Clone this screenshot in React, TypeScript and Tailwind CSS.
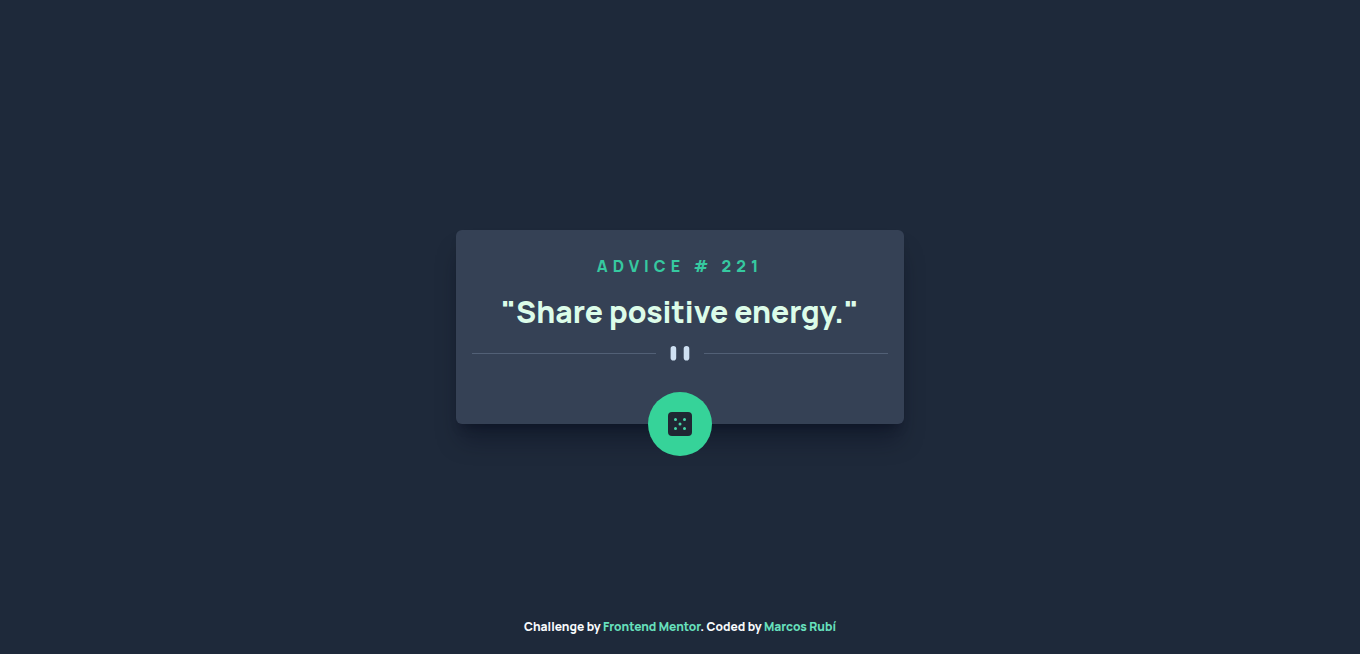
const link = "text-[#67e0bd] hover:underline";

function Divider() {
  return (
    <div className="mt-4 flex w-full items-center" aria-hidden="true">
      <span className="h-px flex-1 bg-[#526076]" />
      <svg viewBox="0 0 48 15" className="h-[15px] w-12" fill="#CEE0F2">
        <rect x="14.6" width="5.6" height="14.6" rx="2.8" />
        <rect x="27.7" width="5.6" height="14.6" rx="2.8" />
      </svg>
      <span className="h-px flex-1 bg-[#526076]" />
    </div>
  );
}

function DiceIcon() {
  return (
    <svg viewBox="0 0 24 24" className="size-6" aria-hidden="true">
      <rect width="24" height="24" rx="4" fill="#202733" />
      <g fill="#45d6a6">
        <circle cx="7.5" cy="7.5" r="1.5" />
        <circle cx="16.5" cy="7.5" r="1.5" />
        <circle cx="12" cy="12" r="1.5" />
        <circle cx="7.5" cy="16.5" r="1.5" />
        <circle cx="16.5" cy="16.5" r="1.5" />
      </g>
    </svg>
  );
}

export default function App() {
  return (
    <div className="grid min-h-screen grid-rows-[1fr_auto_1fr] bg-[#1e293a] font-['Manrope','Inter',sans-serif] font-extrabold">
      <main className="row-start-2 mx-auto flex w-full max-w-md flex-col items-center rounded-md bg-[#354155] px-4 pt-6 text-center shadow-xl shadow-slate-950/35">
        <h1 className="text-base tracking-[5px] text-[#36c9a0]">ADVICE # 221</h1>
        <p className="mt-4 text-3xl text-[#dcfce9]">"Share positive energy."</p>
        <Divider />
        <button
          type="button"
          aria-label="New advice"
          className="mt-[31px] -mb-8 flex size-16 cursor-pointer items-center justify-center rounded-full bg-[#36d399]"
        >
          <DiceIcon />
        </button>
      </main>
      <footer className="row-start-3 self-end pb-[17px] text-center text-xs leading-5 text-slate-50">
        Challenge by{" "}
        <a href="https://www.frontendmentor.io" className={link}>
          Frontend Mentor
        </a>
        . Coded by{" "}
        <a href="#" className={link}>
          Marcos Rubí
        </a>
      </footer>
    </div>
  );
}
